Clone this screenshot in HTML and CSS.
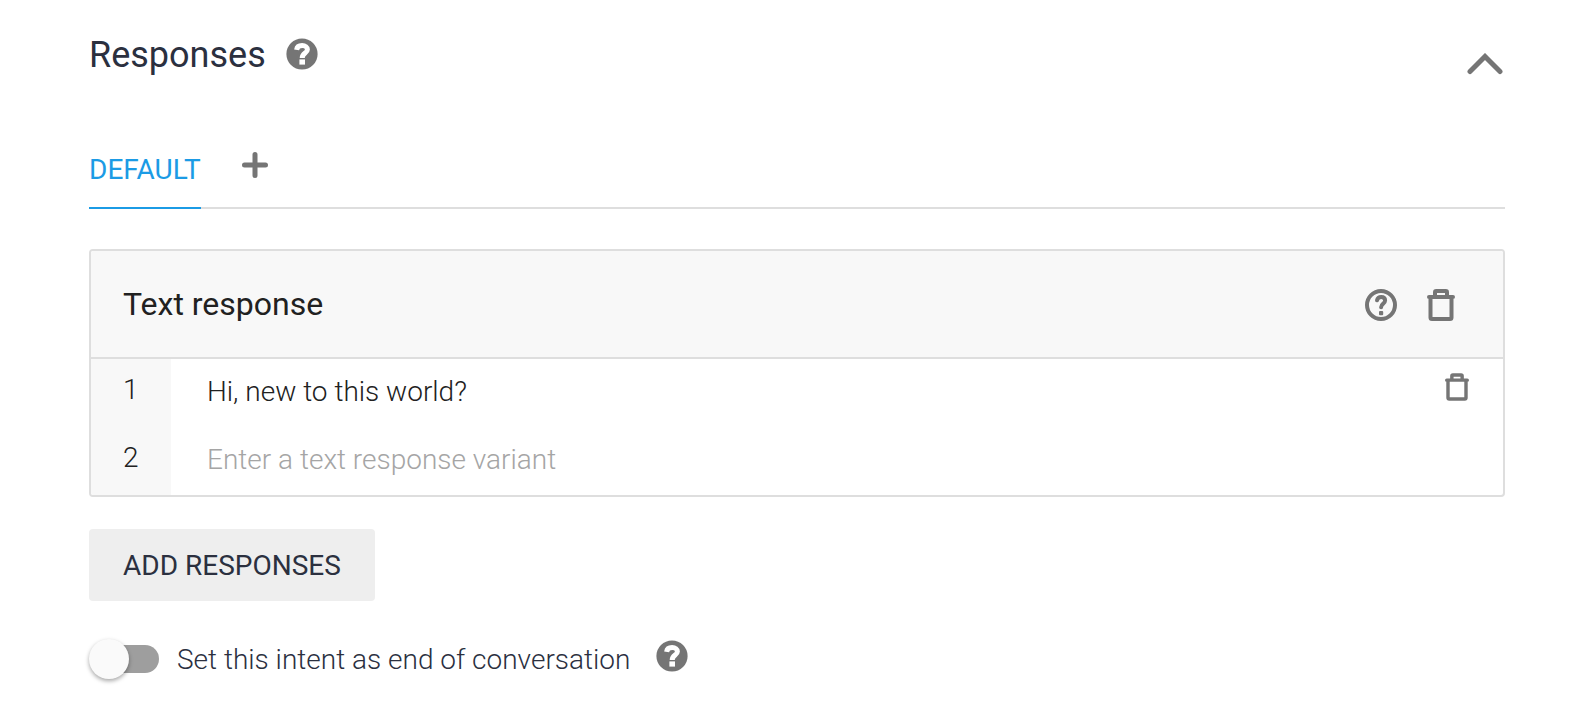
FILE: index.html
```html
<!DOCTYPE html>
<html lang="en">
<head>
<meta charset="utf-8">
<meta name="viewport" content="width=device-width, initial-scale=1">
<title>Responses</title>
<link rel="stylesheet" href="styles.css">
</head>
<body>
<svg class="sprite" aria-hidden="true">
  <symbol id="help" viewBox="0 0 32 32">
    <circle cx="16" cy="16" r="15.6" fill="currentColor"/>
    <path d="M10.600 11.800C11 9 13.200 7.600 16.100 7.600C19.300 7.600 21.400 9.100 21.400 11.500C21.400 15.300 16.200 14.800 16.200 20" fill="none" stroke="#fff" stroke-width="5"/>
    <rect x="13.400" y="21.400" width="5.600" height="5.200" fill="#fff"/>
  </symbol>
  <symbol id="help-outline" viewBox="0 0 32 32">
    <circle cx="16" cy="16" r="14" fill="none" stroke="currentColor" stroke-width="4"/>
    <path d="M12 11.300C12.500 9 14 8 16.200 8C18.600 8 20.100 9.400 20.100 11.500C20.100 14.800 16.100 14.400 16.100 18.300" fill="none" stroke="currentColor" stroke-width="4" stroke-linecap="round"/>
    <rect x="14" y="22" width="4.200" height="4.200" rx="1" fill="currentColor"/>
  </symbol>
  <symbol id="trash" viewBox="0 0 28 32">
    <path d="M2 8H26M3.500 8V28.500Q3.500 30 5 30H23Q24.500 30 24.500 28.500V8M8 7V3.200Q8 2 9.200 2H18.800Q20 2 20 3.200V7" fill="none" stroke="currentColor" stroke-width="4" stroke-linecap="round"/>
  </symbol>
</svg>
<main class="responses">
  <header class="section-header">
    <h1 class="section-title">Responses</h1>
    <button class="icon-button section-help" type="button" aria-label="About responses"><svg class="icon-help"><use href="#help"/></svg></button>
    <button class="icon-button collapse" type="button" aria-label="Collapse"><svg class="icon-chevron" viewBox="0 0 36 22"><path d="M3 18.500L18 3.500L33 18.500" fill="none" stroke="currentColor" stroke-width="5" stroke-linecap="round"/></svg></button>
  </header>

  <nav class="tabs">
    <button class="tab" type="button" aria-current="true">DEFAULT</button>
    <button class="icon-button add-tab" type="button" aria-label="Add tab"><svg class="icon-plus" viewBox="0 0 26 26"><path d="M13 2.500V23.500M2.500 13H23.500" fill="none" stroke="currentColor" stroke-width="5" stroke-linecap="round"/></svg></button>
  </nav>

  <section class="card">
    <header class="card-header">
      <h2 class="card-title">Text response</h2>
      <button class="icon-button card-action" type="button" aria-label="About text responses"><svg class="icon-help-outline"><use href="#help-outline"/></svg></button>
      <button class="icon-button card-action" type="button" aria-label="Delete text response"><svg class="icon-trash"><use href="#trash"/></svg></button>
    </header>
    <div class="variant">
      <label class="variant-number" for="variant-1">1</label>
      <input class="variant-text" id="variant-1" type="text" value="Hi, new to this world?">
      <button class="icon-button variant-delete" type="button" aria-label="Delete variant 1"><svg class="icon-trash-small"><use href="#trash"/></svg></button>
    </div>
    <div class="variant">
      <label class="variant-number" for="variant-2">2</label>
      <input class="variant-text" id="variant-2" type="text" placeholder="Enter a text response variant">
    </div>
  </section>

  <button class="add-responses" type="button">ADD RESPONSES</button>

  <div class="end-setting">
    <input class="switch" id="end" type="checkbox" role="switch">
    <label class="end-label" for="end">Set this intent as end of conversation</label>
    <button class="icon-button end-help" type="button" aria-label="About end of conversation"><svg class="icon-help"><use href="#help"/></svg></button>
  </div>
</main>
</body>
</html>
```
FILE: styles.css
```css
* {
  box-sizing: border-box;
}

body {
  margin: 0;
  background: #fff;
  color: #2b303f;
  font-family: Roboto, sans-serif;
  font-size: 28px;
}

button,
input {
  font: inherit;
  color: inherit;
}

button {
  padding: 0;
  border: 0;
  background: none;
  cursor: pointer;
}

.sprite {
  position: absolute;
  width: 0;
  height: 0;
}

.responses {
  padding: 32px 87px 24px 89px;
}

.icon-button {
  display: flex;
  flex: none;
  color: #757575;
}

.icon-help,
.icon-help-outline {
  width: 32px;
  height: 32px;
}

.section-header {
  display: flex;
  align-items: flex-start;
  gap: 20px;
}

.section-title {
  margin: 0;
  font-size: 36px;
  font-weight: 400;
  line-height: 46px;
}

.section-help {
  padding-top: 6px;
}

.collapse {
  margin-left: auto;
  padding: 21px 2px 0 0;
}

.icon-chevron {
  width: 36px;
  height: 22px;
}

.tabs {
  display: flex;
  gap: 41px;
  margin-top: 67px;
  box-shadow: inset 0 -2px #dedede;
}

.tab {
  height: 64px;
  padding-bottom: 12px;
  border-bottom: 2px solid #1b9be5;
  color: #1b9be5;
  line-height: 50px;
}

.add-tab {
  align-self: flex-start;
  padding-top: 7px;
}

.icon-plus {
  width: 26px;
  height: 26px;
}

.card {
  margin-top: 40px;
  overflow: hidden;
  border: 2px solid #dedede;
  border-radius: 4px;
}

.card-header {
  display: flex;
  align-items: center;
  gap: 30px;
  height: 108px;
  padding: 0 48px 0 32px;
  border-bottom: 2px solid #dedede;
  background: #f8f8f8;
}

.card-title {
  margin: 0 auto 0 0;
  color: #212121;
  font-size: 32px;
  font-weight: 400;
}

.card-action {
  padding-top: 2px;
}

.icon-trash {
  width: 28px;
  height: 32px;
}

.icon-trash-small {
  width: 24px;
  height: 28px;
}

.variant {
  display: flex;
  height: 68px;
  color: #212121;
  font-weight: 300;
}

.variant-number {
  flex: none;
  width: 80px;
  padding-left: 32px;
  background: #f8f8f8;
  line-height: 62px;
}

.variant-text {
  flex: 1;
  min-width: 0;
  height: 64px;
  padding: 0 36px;
  border: 0;
  outline: 0;
  background: none;
}

.variant-text::placeholder {
  color: #a5a5a5;
  opacity: 1;
}

.variant-delete {
  align-self: flex-start;
  padding: 14px 34px 0 0;
}

.add-responses {
  display: block;
  height: 72px;
  margin-top: 32px;
  padding: 0 34px;
  border-radius: 4px;
  background: #eee;
}

.end-setting {
  display: flex;
  align-items: flex-start;
  margin-top: 38px;
  font-weight: 300;
}

.switch {
  position: relative;
  display: flex;
  flex: none;
  align-items: center;
  width: 72px;
  height: 40px;
  margin: 0;
  padding: 0 2px;
  appearance: none;
  cursor: pointer;
}

.switch::before {
  content: "";
  width: 68px;
  height: 28px;
  border-radius: 14px;
  background: #9e9e9e;
}

.switch::after {
  content: "";
  position: absolute;
  top: 0;
  left: 0;
  width: 40px;
  height: 40px;
  border-radius: 50%;
  background: #fafafa;
  box-shadow: 0 2px 4px rgba(0, 0, 0, 0.35);
}

.switch:checked::after {
  left: 32px;
}

.end-label {
  margin-left: 16px;
  line-height: 42px;
}

.end-help {
  margin-left: 26px;
  padding-top: 1px;
}
```
